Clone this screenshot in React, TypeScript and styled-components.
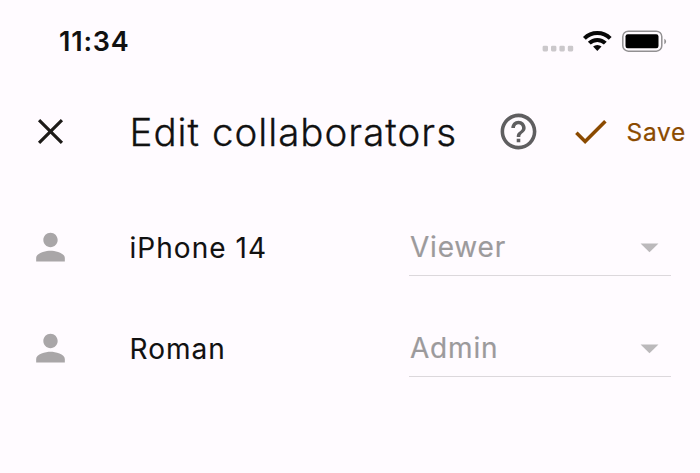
import React from "react";
import styled, { createGlobalStyle } from "styled-components";

const GlobalStyle = createGlobalStyle`
  * { box-sizing: border-box; }
  body { margin: 0; background: #fffbff; }
`;

const Screen = styled.main`
  width: 700px;
  height: 473px;
  overflow: hidden;
  background: #fffbff;
  color: #111;
  font-family: Inter, "Liberation Sans", sans-serif;
`;

const StatusBar = styled.header`
  display: flex;
  align-items: center;
  justify-content: space-between;
  height: 82px;
  padding: 0 33px 0 59px;
`;

const Time = styled.time`
  font-size: 27px;
  font-weight: 600;
  line-height: 32px;
  letter-spacing: 0.8px;
  padding-top: 2px;
`;

const StatusIcons = styled.svg`
  display: block;
  width: 128px;
  height: 26px;
`;

const AppBar = styled.nav`
  display: grid;
  grid-template-columns: 91.5px 376.5px 72px 48.5px auto;
  align-items: center;
  height: 100px;
  padding-left: 38px;
`;

const Title = styled.h1`
  margin: 0;
  font-size: 38.5px;
  font-weight: 300;
  line-height: 48px;
  letter-spacing: 1px;
  -webkit-text-stroke: 0.3px currentColor;
  white-space: nowrap;
`;

const IconButton = styled.button<{ $color: string }>`
  display: flex;
  width: 43px;
  height: 43px;
  padding: 0;
  border: 0;
  background: none;
  color: ${(p) => p.$color};
  margin: -1px 0 0 -9.5px;
`;

const SaveLabel = styled.span`
  color: #8b4a00;
  font-size: 24.5px;
  font-weight: 400;
  line-height: 32px;
  letter-spacing: 0.7px;
  -webkit-text-stroke: 0.2px currentColor;
`;

const List = styled.section`
  padding: 15px 29px 0 28.5px;
`;

const Row = styled.div`
  display: grid;
  grid-template-columns: 101px 279.5px 262px;
  align-items: center;
  height: 101px;
`;

const Name = styled.span`
  font-size: 28px;
  line-height: 36px;
  letter-spacing: 1.05px;
  -webkit-text-stroke: 0.1px currentColor;
`;

const Select = styled.div`
  display: flex;
  align-items: center;
  justify-content: space-between;
  height: 57px;
  border-bottom: 1px solid #dcd8dc;
  color: #9c9a9c;
  font-size: 28px;
  letter-spacing: 0.8px;
  -webkit-text-stroke: 0.2px currentColor;
  padding-left: 1px;
`;

const Glyph = styled.svg<{ $color?: string }>`
  display: block;
  flex: none;
  width: 43px;
  height: 43px;
  fill: ${(p) => p.$color ?? "currentColor"};
`;

const paths = {
  close: "M19 6.25 17.75 5 12 10.75 6.25 5 5 6.25 10.75 12 5 17.75 6.25 19 12 13.25 17.75 19 19 17.75 13.25 12z",
  help: "M11 18h2v-2h-2v2zm1-16C6.48 2 2 6.48 2 12s4.48 10 10 10 10-4.48 10-10S17.52 2 12 2zm0 18c-4.41 0-8-3.59-8-8s3.59-8 8-8 8 3.59 8 8-3.59 8-8 8zm0-14c-2.21 0-4 1.79-4 4h2c0-1.1.9-2 2-2s2 .9 2 2c0 2-3 1.75-3 5h2c0-2.25 3-2.5 3-5 0-2.21-1.79-4-4-4z",
  check: "M9 16.17 4.83 12l-1.42 1.41L9 19 21 7l-1.41-1.41z",
  person: "M12 11.8c2.21 0 4-1.79 4-4s-1.79-4-4-4-4 1.79-4 4 1.79 4 4 4zm0 2c-2.67 0-8 1.34-8 4v2h16v-2c0-2.66-5.33-4-8-4z",
  caret: "M7 9.7l5 5 5-5z",
};

const Icon = ({ name, color }: { name: keyof typeof paths; color?: string }) => (
  <Glyph viewBox="0 0 24 24" $color={color} aria-hidden="true">
    <path d={paths[name]} />
  </Glyph>
);

const collaborators = [
  { name: "iPhone 14", role: "Viewer" },
  { name: "Roman", role: "Admin" },
];

export default function App() {
  return (
    <>
      <GlobalStyle />
      <Screen>
        <StatusBar>
          <Time>11:34</Time>
          <StatusIcons viewBox="0 0 128 26" aria-hidden="true">
            {[3.6, 12, 20.4, 28.8].map((x) => (
              <rect key={x} x={x} y="17.8" width="5.4" height="5.6" rx="1.3" fill="#cbc8cb" />
            ))}
            <g fill="none" stroke="#080808" strokeWidth="4">
              <path d="M45.4 10.4a18.2 18.2 0 0 1 25.8 0" />
              <path d="M50.3 15.2a11.3 11.3 0 0 1 16 0" />
            </g>
            <path d="M54.1 18.6a6 6 0 0 1 8.4 0L58.3 23z" fill="#080808" />
            <rect x="83.8" y="3.2" width="39" height="20" rx="5.5" fill="none" stroke="#929092" strokeWidth="1.5" />
            <rect x="86.5" y="6.3" width="33" height="14" rx="2.2" fill="#000" />
            <path d="M125.3 10.8c2.4 1 2.4 4.5 0 5.5z" fill="#929092" />
          </StatusIcons>
        </StatusBar>
        <AppBar>
          <IconButton $color="#1d1b18" aria-label="Close"><Icon name="close" /></IconButton>
          <Title>Edit collaborators</Title>
          <IconButton $color="#5f5e60" aria-label="Help"><Icon name="help" /></IconButton>
          <IconButton $color="#8b4a00" aria-label="Save changes"><Icon name="check" /></IconButton>
          <SaveLabel>Save</SaveLabel>
        </AppBar>
        <List>
          {collaborators.map(({ name, role }) => (
            <Row key={name}>
              <Icon name="person" color="#a9a6a8" />
              <Name>{name}</Name>
              <Select>
                {role}
                <Icon name="caret" color="#bbb9bb" />
              </Select>
            </Row>
          ))}
        </List>
      </Screen>
    </>
  );
}
